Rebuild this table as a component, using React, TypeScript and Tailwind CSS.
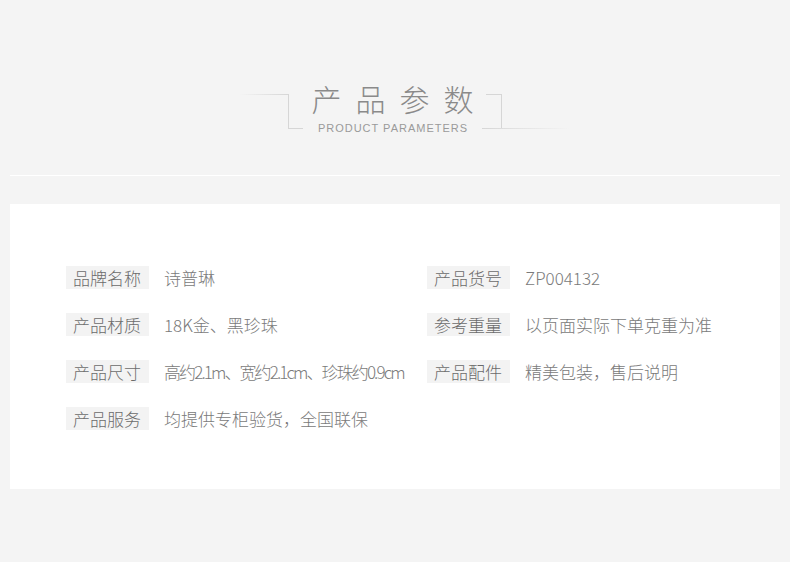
const rows: [string, string, string?, string?][] = [
  ["品牌名称", "诗普琳", "产品货号", "ZP004132"],
  ["产品材质", "18K金、黑珍珠", "参考重量", "以页面实际下单克重为准"],
  ["产品尺寸", "高约2.1m、宽约2.1cm、珍珠约0.9cm", "产品配件", "精美包装，售后说明"],
  ["产品服务", "均提供专柜验货，全国联保"],
];

function Param({ label, value, tight }: { label: string; value: string; tight?: boolean }) {
  return (
    <div className="flex items-center h-[23px]">
      <div className="w-[83px] h-[23px] bg-[#f3f3f3] text-[#6b6b6b] text-[17px] leading-[23px] pl-[7px] whitespace-nowrap">
        {label}
      </div>
      <div
        className={`ml-[15px] text-[#7a7a7a] text-[17px] leading-[23px] whitespace-nowrap ${tight ? "tracking-[-1.9px]" : ""}`}
      >
        {value}
      </div>
    </div>
  );
}

export default function App() {
  return (
    <div
      className="w-[790px] h-[562px] bg-[#f4f4f4] overflow-hidden font-light"
      style={{ fontFamily: '"Noto Sans CJK SC", "Noto Sans", sans-serif' }}
    >
      {/* heading */}
      <div className="flex items-start pt-[80px] pl-[240px]">
        <div className="flex items-start mt-[14px]">
          <div className="w-[48px] h-px bg-gradient-to-r from-[#f4f4f4] to-[#d6d6d6]" />
          <div className="w-[15px] h-[35px] border-l border-b border-[#d6d6d6]" />
        </div>
        <div className="w-[179px] flex flex-col items-center">
          <h1 className="text-[30px] leading-[36px] tracking-[14px] -mr-[14px] text-[#8a8a8a] font-light">产品参数</h1>
          <p
            className="mt-[5px] text-[11px] leading-[14px] tracking-[1px] -mr-[1px] text-[#9a9a9a]"
            style={{ fontFamily: '"Liberation Sans", Arial, sans-serif' }}
          >
            PRODUCT PARAMETERS
          </p>
        </div>
        <div className="flex flex-col mt-[14px]">
          <div className="ml-[4px] w-[16px] h-[34px] border-t border-r border-[#d6d6d6]" />
          <div className="w-[88px] h-px bg-gradient-to-r from-[#d6d6d6] to-[#f4f4f4]" />
        </div>
      </div>

      {/* divider */}
      <div className="mt-[40px] mx-[10px] h-px bg-white" />

      {/* card */}
      <div className="mt-[28px] mx-[10px] h-[285px] bg-white pt-[62px] pl-[56px]">
        <div className="flex flex-col gap-[24px]">
          {rows.map((r, i) => (
            <div key={i} className="flex">
              <div className="w-[361px]">
                <Param label={r[0]} value={r[1]} tight={i === 2} />
              </div>
              {r[2] && r[3] && <Param label={r[2]} value={r[3]} />}
            </div>
          ))}
        </div>
      </div>
    </div>
  );
}
